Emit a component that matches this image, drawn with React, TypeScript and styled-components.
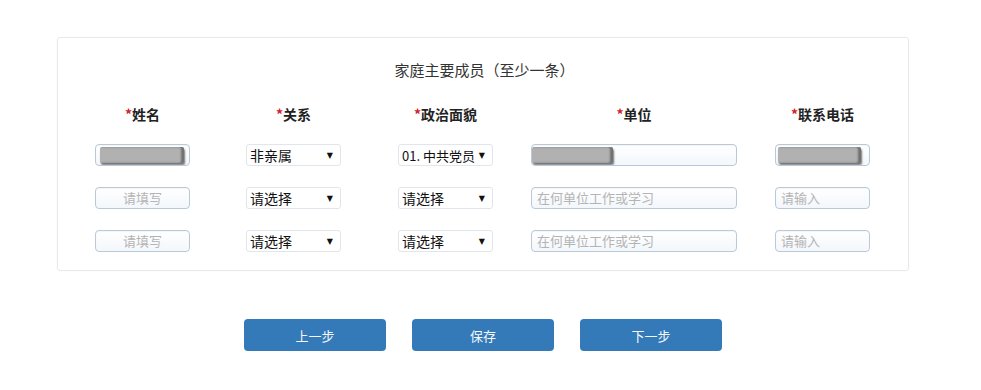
import React from "react";
import styled, { createGlobalStyle } from "styled-components";

const Global = createGlobalStyle`
  html, body { margin: 0; padding: 0; background: #ffffff; }
  body { font-family: "Noto Sans CJK SC", "Liberation Sans", sans-serif; }
`;

const Page = styled.div`
  width: 981px;
  height: 390px;
  padding-top: 37px;
  box-sizing: border-box;
`;

const Panel = styled.section`
  margin-left: 57px;
  width: 852px;
  height: 234px;
  box-sizing: border-box;
  border: 1px solid #e6eaee;
  border-radius: 3px;
  padding: 19px 38px 0 37px;
  box-shadow: 0 0 2px rgba(0, 0, 0, 0.04);
`;

const Title = styled.h2`
  margin: 0 0 14px;
  font-size: 15px;
  font-weight: normal;
  line-height: 26px;
  color: #333;
  text-align: center;
  padding-left: 4px;
`;

const Grid = styled.div`
  display: grid;
  grid-template-columns: 151px 152px 133px 244px 95px;
  grid-template-rows: 26px 22px 22px 22px;
  row-gap: 21px;
  align-items: center;
  & > :nth-child(-n + 5) {
    margin-bottom: -8px;
  }
`;

const Label = styled.div<{ $w: number }>`
  width: ${(p) => p.$w}px;
  text-align: center;
  font-size: 14px;
  font-weight: bold;
  color: #222;
  line-height: 20px;
`;

const Star = styled.span`
  color: #d0222a;
  font-weight: bold;
`;

const Field = styled.div<{ $w: number }>`
  position: relative;
  width: ${(p) => p.$w}px;
  height: 22px;
  box-sizing: border-box;
  border: 1px solid #b9c9d8;
  border-radius: 4px;
  background: linear-gradient(#ffffff, #f3f7fb);
  box-shadow: inset 0 1px 1px rgba(0, 0, 0, 0.04);
  font-size: 13px;
  line-height: 20px;
  color: #b4b4b4;
  padding: 0 5px;
  overflow: hidden;
  white-space: nowrap;
`;

const Centered = styled.div`
  text-align: center;
`;

const Redacted = styled.div<{ $left: number; $right: number }>`
  position: absolute;
  top: 2px;
  left: ${(p) => p.$left}px;
  right: ${(p) => p.$right}px;
  height: 16px;
  background: #b1b1b1;
  border-radius: 2px;
  box-shadow: 1px 2px 2px rgba(60, 60, 60, 0.7), inset -3px 0 2px rgba(70, 70, 70, 0.6);
  filter: blur(0.4px);
`;

const SelectBox = styled.div`
  width: 95px;
  height: 22px;
  box-sizing: border-box;
  border: 1px solid #e0e6ec;
  border-radius: 3px;
  background: #ffffff;
  display: flex;
  align-items: center;
  justify-content: space-between;
  padding: 0 7px 0 3px;
  font-size: 14px;
  color: #111;
`;

const Arrow = styled.span`
  font-size: 8px;
  color: #111;
  font-family: "DejaVu Sans", sans-serif;
`;

const PartyText = styled.span`
  font-size: 13px;
`;

const Buttons = styled.div`
  display: flex;
  gap: 26px;
  margin-top: 48px;
  padding-left: 244px;
`;

const Button = styled.button`
  width: 142px;
  height: 32px;
  border: none;
  border-radius: 4px;
  background: #347ab8;
  color: #f4f8fc;
  font-family: "Noto Sans CJK SC", "Liberation Sans", sans-serif;
  font-size: 13px;
  padding: 0;
`;

const Select: React.FC<{ children: React.ReactNode }> = ({ children }) => (
  <SelectBox>
    <span>{children}</span>
    <Arrow>▼</Arrow>
  </SelectBox>
);

export default function App() {
  const emptyRows = [0, 1];
  return (
    <Page>
      <Global />
      <Panel>
        <Title>家庭主要成员（至少一条）</Title>
        <Grid>
          <Label $w={95}><Star>*</Star>姓名</Label>
          <Label $w={95}><Star>*</Star>关系</Label>
          <Label $w={95}><Star>*</Star>政治面貌</Label>
          <Label $w={206}><Star>*</Star>单位</Label>
          <Label $w={95}><Star>*</Star>联系电话</Label>

          <Field $w={95}><Redacted $left={4} $right={5} /></Field>
          <Select>非亲属</Select>
          <Select><PartyText>01. 中共党员</PartyText></Select>
          <Field $w={206}><Redacted $left={0} $right={123} /></Field>
          <Field $w={95}><Redacted $left={2} $right={8} /></Field>

          {emptyRows.map((r) => (
            <React.Fragment key={r}>
              <Field $w={95}><Centered>请填写</Centered></Field>
              <Select>请选择</Select>
              <Select>请选择</Select>
              <Field $w={206}>在何单位工作或学习</Field>
              <Field $w={95}>请输入</Field>
            </React.Fragment>
          ))}
        </Grid>
      </Panel>
      <Buttons>
        <Button>上一步</Button>
        <Button>保存</Button>
        <Button>下一步</Button>
      </Buttons>
    </Page>
  );
}
